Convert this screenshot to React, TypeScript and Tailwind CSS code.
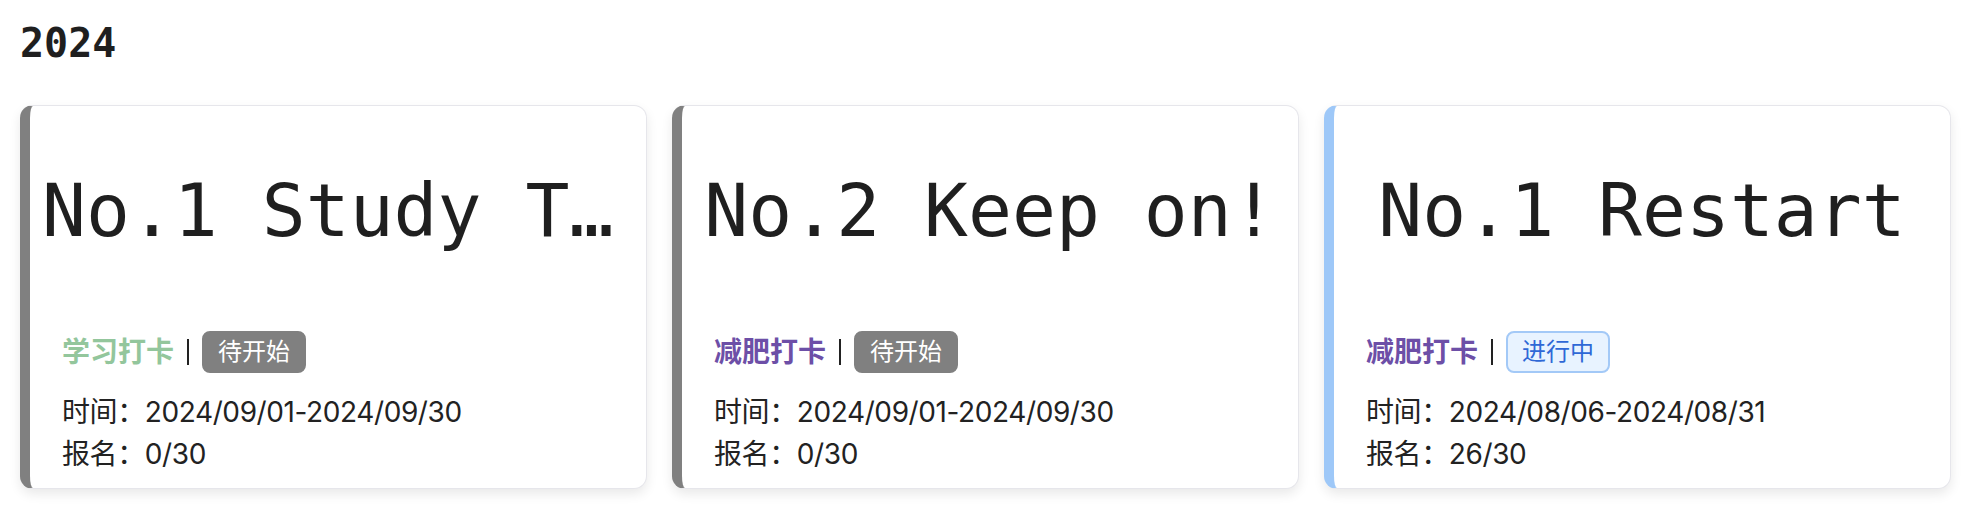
import React from "react";

type Card = {
  title: string;
  tag: string;
  tagColor: string;
  stripe: string;
  status: "pending" | "active";
  time: string;
  signup: string;
};

const cards: Card[] = [
  {
    title: "No.1 Study Together",
    tag: "学习打卡",
    tagColor: "text-[#93c69c]",
    stripe: "border-l-[#808080]",
    status: "pending",
    time: "2024/09/01-2024/09/30",
    signup: "0/30",
  },
  {
    title: "No.2 Keep on!",
    tag: "减肥打卡",
    tagColor: "text-[#6d4fa7]",
    stripe: "border-l-[#808080]",
    status: "pending",
    time: "2024/09/01-2024/09/30",
    signup: "0/30",
  },
  {
    title: "No.1 Restart",
    tag: "减肥打卡",
    tagColor: "text-[#6d4fa7]",
    stripe: "border-l-[#9ec8f8]",
    status: "active",
    time: "2024/08/06-2024/08/31",
    signup: "26/30",
  },
];

const sans = "font-['Inter','Noto_Sans_CJK_SC',sans-serif]";
const mono = "font-['DejaVu_Sans_Mono',monospace]";

function StatusBadge({ status }: { status: Card["status"] }) {
  if (status === "active") {
    return (
      <span className="flex h-[42px] items-center rounded-[8px] border-2 border-[#a3c9f7] bg-[#e8f3ff] px-[14px] text-[24px] text-[#2f68d6]">
        进行中
      </span>
    );
  }
  return (
    <span className="flex h-[42px] items-center rounded-[8px] border-2 border-[#808080] bg-[#808080] px-[14px] text-[24px] text-white">
      待开始
    </span>
  );
}

function CardView({ c }: { c: Card }) {
  return (
    <div
      className={`flex w-[627px] flex-col rounded-[13px] border border-[#e6e6eb] border-l-[10px] ${c.stripe} bg-white shadow-[0_5px_12px_rgba(0,0,0,0.09)] ${sans}`}
    >
      <div className="flex h-[210px] items-center px-[12px]">
        <div
          className={`w-full overflow-hidden text-ellipsis whitespace-nowrap text-center text-[73px] leading-[86px] text-[#1f1f1f] ${mono}`}
        >
          {c.title}
        </div>
      </div>
      <div className="mt-[15px] flex items-center pl-[32px]">
        <span className={`text-[28px] font-semibold leading-[42px] ${c.tagColor}`}>
          {c.tag}
        </span>
        <span className="mx-[13px] h-[26px] w-[2px] bg-[#222]" />
        <StatusBadge status={c.status} />
      </div>
      <div className="mt-[18px] pb-[13px] pl-[32px] text-[28px] leading-[42px] tracking-[-0.4px] text-[#222]">
        <div>时间：{c.time}</div>
        <div>报名：{c.signup}</div>
      </div>
    </div>
  );
}

export default function App() {
  return (
    <div className="h-[528px] w-[1982px] bg-white">
      <div className="px-[20px] pt-[20px]">
        <h2 className={`text-[40px] font-bold leading-[46px] text-[#1f1f1f] ${mono}`}>
          2024
        </h2>
        <div className="mt-[39px] flex gap-[25px]">
          {cards.map((c, i) => (
            <CardView key={i} c={c} />
          ))}
        </div>
      </div>
    </div>
  );
}
